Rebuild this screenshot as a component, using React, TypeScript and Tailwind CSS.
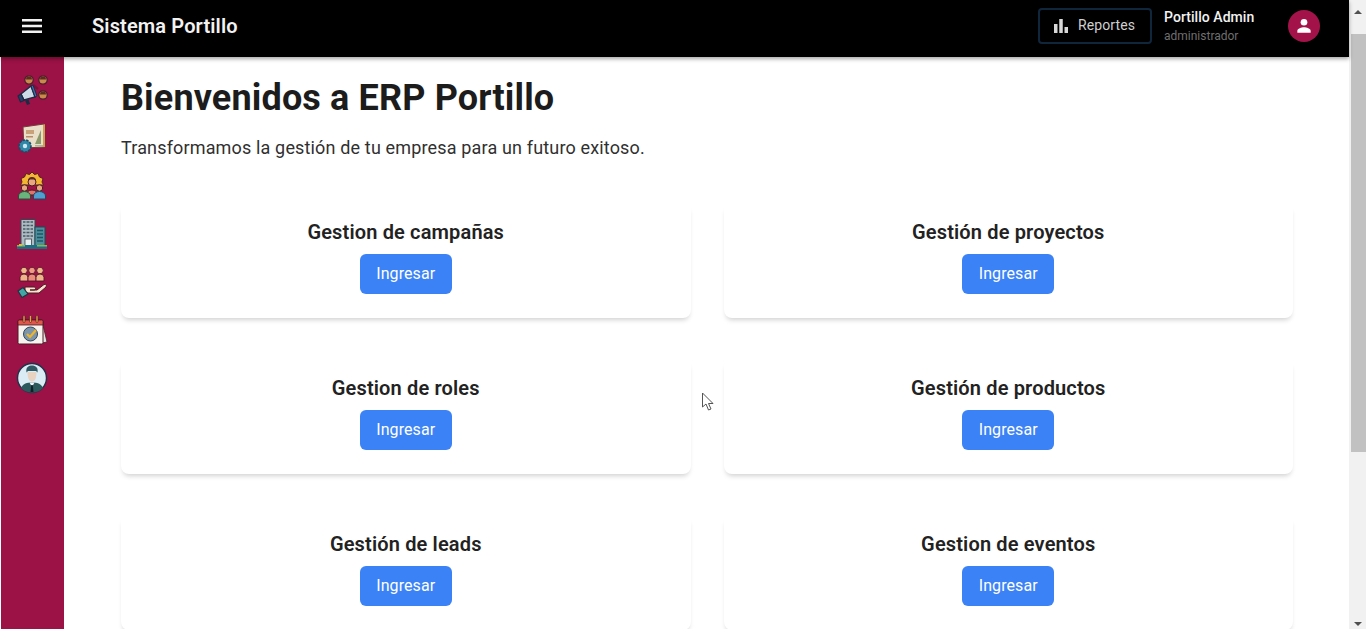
const modules = [
  'Gestion de campañas',
  'Gestión de proyectos',
  'Gestion de roles',
  'Gestión de productos',
  'Gestión de leads',
  'Gestion de eventos',
];

function CampaignIcon() {
  return (
    <svg viewBox="0 0 32 32" className="w-8 h-8">
      <circle cx="13" cy="6" r="4.200" fill="#c98a4b" stroke="#4a1c2c" strokeWidth="1.200" />
      <path d="M10 5.500 a3 3 0 0 1 6 0z" fill="#5b2c22" />
      <circle cx="27" cy="6" r="4.200" fill="#c98a4b" stroke="#4a1c2c" strokeWidth="1.200" />
      <path d="M24 5.500 a3 3 0 0 1 6 0z" fill="#5b2c22" />
      <circle cx="27" cy="21" r="4.200" fill="#c98a4b" stroke="#4a1c2c" strokeWidth="1.200" />
      <path d="M24 20.500 a3 3 0 0 1 6 0z" fill="#5b2c22" />
      <path d="M17 11 L22 15" stroke="#7a1038" strokeWidth="2.500" />
      <path d="M5 20 L15 12 L19 23 L8 26 Z" fill="#cfdce8" stroke="#1d2a44" strokeWidth="1.400" />
      <path d="M15 12 L19 23 L21 22 L17 11 Z" fill="#3f6fa8" stroke="#1d2a44" strokeWidth="1" />
      <path d="M2 22 L5 20 L8 26.500 L4.500 28 Z" fill="#27406b" stroke="#1d2a44" strokeWidth="1.200" />
      <path d="M9 26.500 L11 31 L14 30 L12.500 25.500 Z" fill="#1d2a44" />
    </svg>
  );
}

function ProjectIcon() {
  return (
    <svg viewBox="0 0 32 32" className="w-8 h-8">
      <path d="M7 5 L28 2 L29 25 L8 26 Z" fill="#e9dfc8" stroke="#7a3a3a" strokeWidth="1" />
      <path d="M10 8 H18 V12 H10 Z" fill="#c9a27c" />
      <path d="M10 14 H17 V15.500 H10 Z" fill="#b98a6a" />
      <path d="M19 22 L25 8 V22 Z" fill="#8c9a6b" />
      <path d="M27 3 L29 2 V25 L27 25 Z" fill="#c9a04d" />
      <path d="M19 23 H27 V24.500 H19Z" fill="#a8b59a" />
      <circle cx="9" cy="24" r="6" fill="#2f87a8" stroke="#1d4a63" strokeWidth="1.600" strokeDasharray="2.400 1.200" />
      <circle cx="9" cy="24" r="2.200" fill="#cfe6ee" />
    </svg>
  );
}

function RolesIcon() {
  return (
    <svg viewBox="0 0 32 32" className="w-8 h-8">
      <path d="M16 2 L18.500 4.500 L22 3.500 L23.500 7 L27 8.500 L26 12 L27.500 15 H4.500 L6 12 L5 8.500 L8.500 7 L10 3.500 L13.500 4.500 Z" fill="#f2b632" stroke="#5a1f25" strokeWidth="1" />
      <circle cx="16" cy="12" r="4" fill="#e8a77e" stroke="#4a1c22" strokeWidth="1" />
      <path d="M12 11 a4 4 0 0 1 8 0 L18 9.500 H14Z" fill="#5b2c22" />
      <path d="M10 25 a6 5 0 0 1 12 0z" fill="#e0736a" stroke="#4a1c22" strokeWidth="1" />
      <circle cx="8.500" cy="18" r="3.200" fill="#e8a77e" stroke="#4a1c22" strokeWidth="1" />
      <path d="M2.500 29 V26 a6 4.500 0 0 1 12 0 V29Z" fill="#69b37c" stroke="#2d4d3a" strokeWidth="1" />
      <circle cx="23.500" cy="18" r="3.200" fill="#e8a77e" stroke="#4a1c22" strokeWidth="1" />
      <path d="M17.500 29 V26 a6 4.500 0 0 1 12 0 V29Z" fill="#4f9fd0" stroke="#24465e" strokeWidth="1" />
    </svg>
  );
}

function BuildingIcon() {
  return (
    <svg viewBox="0 0 32 32" className="w-8 h-8">
      <rect x="5" y="1.500" width="14" height="26" fill="#aebcc4" stroke="#39464f" strokeWidth="1" />
      <path d="M7 4 H17 M7 7.500 H17 M7 11 H17 M7 14.500 H17 M7 18 H17" stroke="#4b5b66" strokeWidth="1.600" />
      <path d="M10 2 V19 M14 2 V19" stroke="#aebcc4" strokeWidth="1" />
      <rect x="19" y="9" width="10" height="18.500" fill="#4c8f9d" stroke="#1f4a57" strokeWidth="1" />
      <path d="M21 12.500 H27 M21 16 H27 M21 19.500 H27 M21 23 H27" stroke="#1f5563" strokeWidth="1.500" />
      <rect x="9" y="21" width="6.500" height="7" fill="#e9eef0" stroke="#39464f" strokeWidth="0.800" />
      <path d="M1 27 H31 V31 H1 Z" fill="#1c6f82" />
      <path d="M1 27 H9 V28.500 H1Z M21 27 H31 V28.500 H21Z" fill="#8ab84a" />
      <path d="M3 26 h3 v2 h-3z" fill="#d8c14a" />
    </svg>
  );
}

function CustomersIcon() {
  return (
    <svg viewBox="0 0 32 32" className="w-8 h-8">
      {[8, 16, 24].map((x) => (
        <g key={x}>
          <circle cx={x} cy="4.500" r="3.300" fill={x === 16 ? '#ef9a84' : '#f0b98c'} stroke="#5a1428" strokeWidth="0.900" />
          <path d={`M${x - 4} 15 V11.500 a4 3.500 0 0 1 8 0 V15Z`} fill={x === 16 ? '#ea8c7a' : '#eeb48a'} stroke="#5a1428" strokeWidth="0.900" />
        </g>
      ))}
      <path d="M9 21 H18 C20 21 20 24 18 24 H14 L21 24 L28 18.500 C30 17.500 31 19.500 30 21 L23 27 H12 L9 26 Z" fill="#fbe3cf" stroke="#4a1c22" strokeWidth="1" />
      <path d="M2 25 L7 21.500 L12 28 L6 31.500 Z" fill="#42a8a6" stroke="#20343f" strokeWidth="1.200" />
    </svg>
  );
}

function CalendarIcon() {
  return (
    <svg viewBox="0 0 32 32" className="w-8 h-8">
      <path d="M26 7 L31 28 L26 29 Z" fill="#e3e3e3" stroke="#4a1c22" strokeWidth="0.800" />
      <rect x="2" y="6" width="25" height="24" rx="1.500" fill="#f7f4ef" stroke="#4a1c22" strokeWidth="1" />
      <path d="M2 7.500 a1.500 1.500 0 0 1 1.500 -1.500 H25.500 a1.500 1.500 0 0 1 1.500 1.500 V11 H2Z" fill="#e2574c" stroke="#4a1c22" strokeWidth="0.800" />
      {[8, 14.500, 21].map((x) => (
        <rect key={x} x={x - 1} y="1.500" width="2" height="7" rx="1" fill="#e9a14a" stroke="#4a1c22" strokeWidth="0.600" />
      ))}
      <circle cx="14.500" cy="20" r="7" fill="#7c95ab" stroke="#33475a" strokeWidth="1" />
      <path d="M11 20 L14 23 L20 16" fill="none" stroke="#f0b429" strokeWidth="2.200" />
    </svg>
  );
}

function ProfileIcon() {
  return (
    <svg viewBox="0 0 32 32" className="w-8 h-8">
      <circle cx="16" cy="16" r="14.500" fill="#dcecf4" stroke="#1e3349" strokeWidth="1.400" />
      <path d="M5 26 C7 21.500 11 20.500 16 20.500 C21 20.500 25 21.500 27 26 C24 29.500 20 30.500 16 30.500 C12 30.500 8 29.500 5 26Z" fill="#2c5a5c" />
      <path d="M13.500 20.500 L16 25 L18.500 20.500Z" fill="#f1f5f8" />
      <path d="M15.200 23 H16.800 L17.500 30 H14.500Z" fill="#10202a" />
      <path d="M11.500 10 C11.500 16 13 19.500 16 19.500 C19 19.500 20.500 16 20.500 10Z" fill="#e8d2c0" />
      <path d="M10.500 10.500 C9.500 5 13 3.500 16 3.500 C19.500 3.500 22.500 5.500 21.500 10.500 L20 9 H12Z" fill="#2f5a63" />
    </svg>
  );
}

const sideIcons = [CampaignIcon, ProjectIcon, RolesIcon, BuildingIcon, CustomersIcon, CalendarIcon, ProfileIcon];

function Scrollbar() {
  return (
    <div className="w-[17px] shrink-0 bg-[#f1f1f1] flex flex-col items-center">
      <div className="h-[34px] w-full flex items-start justify-center pt-[10px]">
        <div className="w-0 h-0 border-x-[4px] border-x-transparent border-b-[4px] border-b-[#505050]" />
      </div>
      <div className="h-[418px] w-[15px] ml-[2px] bg-[#c1c1c1]" />
      <div className="flex-1 w-full flex items-end justify-center pb-[3px]">
        <div className="w-0 h-0 border-x-[4px] border-x-transparent border-t-[4px] border-t-[#505050]" />
      </div>
    </div>
  );
}

export default function App() {
  return (
    <div className="relative flex h-[629px] w-full overflow-hidden bg-white font-['Roboto',sans-serif]">
      <div className="flex-1 min-w-0 flex flex-col">
        <header className="relative z-10 h-[57px] shrink-0 bg-black shadow-[0_2px_4px_rgba(0,0,0,0.35)] flex items-center pb-[6px]">
          <svg viewBox="0 0 20 14" className="ml-[22px] w-[20px] h-[14px]" fill="#f2f2f2">
            <rect x="0" y="0" width="20" height="2.500" />
            <rect x="0" y="5.750" width="20" height="2.500" />
            <rect x="0" y="11.500" width="20" height="2.500" />
          </svg>
          <h1 className="ml-[50px] text-[20px] font-semibold tracking-[0.13px] text-[#f2f2f2]">Sistema Portillo</h1>
          <div className="ml-auto flex items-center">
            <button className="w-[114px] h-[36px] rounded border-2 border-[#10263c] flex items-center justify-center gap-[9px] pr-[2px] text-[#cfcfcf] text-[14px] tracking-[0.1px]">
              <svg viewBox="0 0 16 14" className="w-[16px] h-[14px]" fill="#d8d8d8">
                <rect x="1" y="5" width="3.500" height="9" />
                <rect x="6.250" y="0" width="3.500" height="14" />
                <rect x="11.500" y="8" width="3.500" height="6" />
              </svg>
              Reportes
            </button>
            <div className="ml-[12px] w-[124px] flex flex-col">
              <span className="text-[14px] leading-[21px] font-medium tracking-[0.05px] text-[#f2f2f2]">Portillo Admin</span>
              <span className="text-[12px] leading-[16px] text-[#6f6f6f]">administrador</span>
            </div>
            <div className="mr-[29px] w-[32px] h-[32px] rounded-full bg-[#a3134a] flex items-center justify-center">
              <svg viewBox="0 0 24 24" className="w-[20px] h-[20px]" fill="#ffffff">
                <circle cx="12" cy="7.500" r="4" />
                <path d="M4 20 V18 C4 15 9 13.500 12 13.500 C15 13.500 20 15 20 18 V20Z" />
              </svg>
            </div>
          </div>
        </header>
        <div className="flex-1 min-h-0 flex">
          <aside className="ml-px w-[63px] shrink-0 bg-[#9c1246] flex flex-col items-center pt-[17px] pr-px gap-[16px]">
            {sideIcons.map((Icon, i) => (
              <Icon key={i} />
            ))}
          </aside>
          <main className="flex-1 min-w-0 pl-[57px] pr-[56px] pt-[20px]">
            <h2 className="text-[36px] leading-[42px] font-bold tracking-[0.15px] text-[#1c1c1c]">Bienvenidos a ERP Portillo</h2>
            <p className="mt-[17px] text-[18px] leading-[24px] tracking-[0.155px] text-[#303030]">
              Transformamos la gestión de tu empresa para un futuro exitoso.
            </p>
            <div className="mt-[43px] grid grid-cols-2 gap-x-[33px] gap-y-[41px]">
              {modules.map((title) => (
                <div
                  key={title}
                  className="h-[115px] rounded-lg bg-white shadow-[0_4px_5px_-2px_rgba(0,0,0,0.18)] flex flex-col items-center pt-[15px]"
                >
                  <h3 className="text-[20px] leading-[28px] font-semibold tracking-[0.15px] text-[#222222]">{title}</h3>
                  <button className="mt-[8px] w-[92px] h-[40px] rounded-md bg-[#3b82f6] text-white text-[16px] tracking-[0.1px]">
                    Ingresar
                  </button>
                </div>
              ))}
            </div>
          </main>
        </div>
      </div>
      <Scrollbar />
      {/* mouse pointer caught in the capture */}
      <svg viewBox="0 0 14 20" className="absolute left-[701px] top-[392px] w-[14px] h-[20px]">
        <path d="M1.500 1 V15 L5 12 L7.500 18 L10 17 L7.500 11.500 L12 11.500 Z" fill="#ffffff" stroke="#555555" strokeWidth="1" />
      </svg>
    </div>
  );
}
